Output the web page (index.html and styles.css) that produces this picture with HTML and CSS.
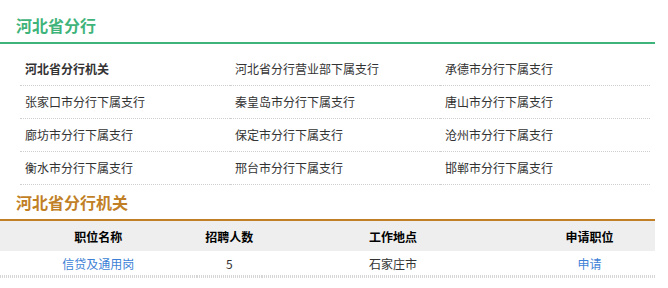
FILE: index.html
```html
<!DOCTYPE html>
<html lang="zh">
<head>
<meta charset="utf-8">
<link rel="stylesheet" href="styles.css">
</head>
<body>
<div class="page">
  <h2 class="title title-green">河北省分行</h2>
  <ul class="branches">
    <li class="strong">河北省分行机关</li>
    <li>河北省分行营业部下属支行</li>
    <li>承德市分行下属支行</li>
    <li>张家口市分行下属支行</li>
    <li>秦皇岛市分行下属支行</li>
    <li>唐山市分行下属支行</li>
    <li>廊坊市分行下属支行</li>
    <li>保定市分行下属支行</li>
    <li>沧州市分行下属支行</li>
    <li>衡水市分行下属支行</li>
    <li>邢台市分行下属支行</li>
    <li>邯郸市分行下属支行</li>
  </ul>
  <h2 class="title title-brown">河北省分行机关</h2>
  <table class="jobs">
    <colgroup>
      <col class="c1"><col class="c2"><col class="c3"><col class="c4">
    </colgroup>
    <thead>
      <tr><th>职位名称</th><th>招聘人数</th><th>工作地点</th><th>申请职位</th></tr>
    </thead>
    <tbody>
      <tr><td><a href="#">信贷及通用岗</a></td><td>5</td><td>石家庄市</td><td><a href="#">申请</a></td></tr>
    </tbody>
  </table>
</div>
</body>
</html>
```

FILE: styles.css
```css
html, body {
  margin: 0;
  padding: 0;
  background: #fff;
}
body {
  font-family: "Noto Sans CJK SC", "Noto Sans", sans-serif;
  color: #333;
  font-size: 12px;
}
.page {
  width: 655px;
}
.title {
  margin: 0;
  padding: 0 0 0 16px;
  font-size: 16px;
  font-weight: bold;
  line-height: 24px;
}
.title-green {
  color: #3fb47a;
  padding-top: 13px;
  padding-bottom: 5px;
  border-bottom: 2px solid #3fb47a;
}
.title-brown {
  color: #c17f26;
  padding-top: 5px;
  padding-bottom: 5px;
  border-bottom: 2px solid #c17f26;
}
.branches {
  list-style: none;
  margin: 9px 0 0 20px;
  padding: 0;
  width: 630px;
  display: grid;
  grid-template-columns: repeat(3, 210px);
}
.branches li {
  height: 32px;
  line-height: 32px;
  padding-left: 5px;
  border-bottom: 1px dotted #cfcfcf;
  color: #333;
}
.branches li.strong {
  font-weight: bold;
}
.jobs {
  width: 655px;
  border-collapse: collapse;
  table-layout: fixed;
}
.jobs .c1 { width: 30%; }
.jobs .c2 { width: 10%; }
.jobs .c3 { width: 40%; }
.jobs .c4 { width: 20%; }
.jobs th {
  background: #eee;
  height: 30px;
  padding: 0;
  font-weight: bold;
  color: #000;
  text-align: center;
  font-size: 12px;
}
.jobs td {
  height: 24px;
  padding: 0 0 3px;
  text-align: center;
  color: #333;
  background-image: repeating-linear-gradient(to right, #d6d6d6 0 1px, #fff 1px 2px);
  background-size: 100% 3px;
  background-position: left bottom;
  background-repeat: no-repeat;
}
.jobs a {
  color: #3d7fd6;
  text-decoration: none;
}
```
